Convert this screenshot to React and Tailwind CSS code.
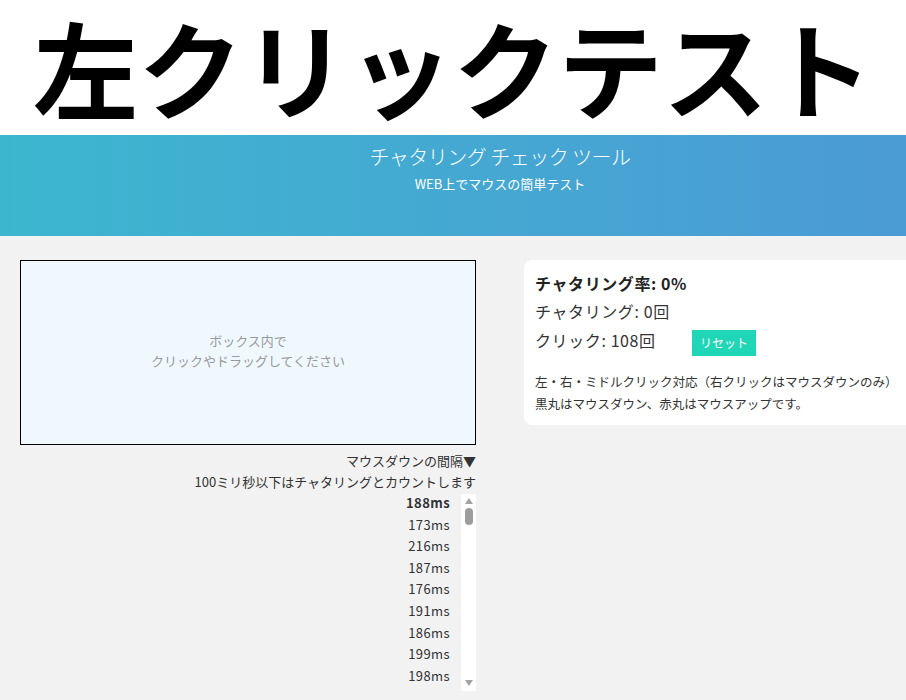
export default function App() {
  const items = ["188ms", "173ms", "216ms", "187ms", "176ms", "191ms", "186ms", "199ms", "198ms"];
  const font = { fontFamily: '"Noto Sans CJK JP", "Noto Sans", sans-serif' };
  return (
    <div className="min-h-[700px] w-[906px] overflow-hidden bg-[#f2f2f2] text-[#333]" style={font}>
      <div className="w-[1000px]">
        <header className="h-[135px] w-[906px] bg-white flex items-center justify-center">
          <h1 className="text-[105px] font-bold leading-[1.45] text-black mt-[-4px] whitespace-nowrap">左クリックテスト</h1>
        </header>
        <div className="h-[101px] bg-linear-to-r from-[#3cb6cf] to-[#4c98d5] flex flex-col items-center pt-[9px] text-white">
          <div className="text-[20px] leading-[26px] font-light tracking-[-0.5px]">チャタリング チェック ツール</div>
          <div className="text-[13px] leading-[20px] mt-[4px]">WEB上でマウスの簡単テスト</div>
        </div>
        <main className="flex gap-[48px] pl-[20px] pt-[24px]">
          <div className="w-[456px] shrink-0 flex flex-col">
            <div className="h-[185px] border border-black bg-[#f0f8ff] flex flex-col items-center justify-center pb-[4px] text-[13px] leading-[20px] text-[#999]">
              <div>ボックス内で</div>
              <div>クリックやドラッグしてください</div>
            </div>
            <div className="mt-[5px] text-right text-[13px] leading-[21px] text-[#333]">
              <div>マウスダウンの間隔▼</div>
              <div>100ミリ秒以下はチャタリングとカウントします</div>
            </div>
            <div className="flex justify-end mt-[2px]">
              <div className="flex flex-col items-end pr-[11px] mt-[-2px] text-[13px] leading-[21.6px] tracking-[0.4px] text-[#333]">
                {items.map((it, i) => (
                  <div key={i} className={i === 0 ? "font-bold" : ""}>{it}</div>
                ))}
              </div>
              <div className="w-[15px] h-[197px] bg-white flex flex-col items-center">
                <div className="mt-[4px] w-0 h-0 border-l-[4px] border-r-[4px] border-b-[6px] border-l-transparent border-r-transparent border-b-[#a3a3a3]" />
                <div className="mt-[4px] w-[8px] h-[17px] rounded-full bg-[#9c9c9c]" />
                <div className="flex-1" />
                <div className="mb-[5px] w-0 h-0 border-l-[4px] border-r-[4px] border-t-[6px] border-l-transparent border-r-transparent border-t-[#a3a3a3]" />
              </div>
            </div>
          </div>
          <div className="w-[420px] shrink-0 self-start h-[165px] bg-white rounded-[8px] pl-[11px] pt-[9px]">
            <div className="text-[16px] leading-[28px] font-bold text-[#222] tracking-[0.6px]">チャタリング率: 0%</div>
            <div className="text-[16px] leading-[29px] text-[#333] tracking-[0.6px]">チャタリング: 0回</div>
            <div className="flex items-start">
              <span className="text-[16px] leading-[28px] text-[#333] w-[157px] tracking-[0.6px]">クリック: 108回</span>
              <button className="mt-[4px] h-[26px] w-[64px] bg-[#1fd6b6] text-white text-[12px] leading-none">リセット</button>
            </div>
            <div className="mt-[15px] text-[12.5px] leading-[22px] text-[#333]">
              <div>左・右・ミドルクリック対応（右クリックはマウスダウンのみ）</div>
              <div>黒丸はマウスダウン、赤丸はマウスアップです。</div>
            </div>
          </div>
        </main>
      </div>
    </div>
  );
}
